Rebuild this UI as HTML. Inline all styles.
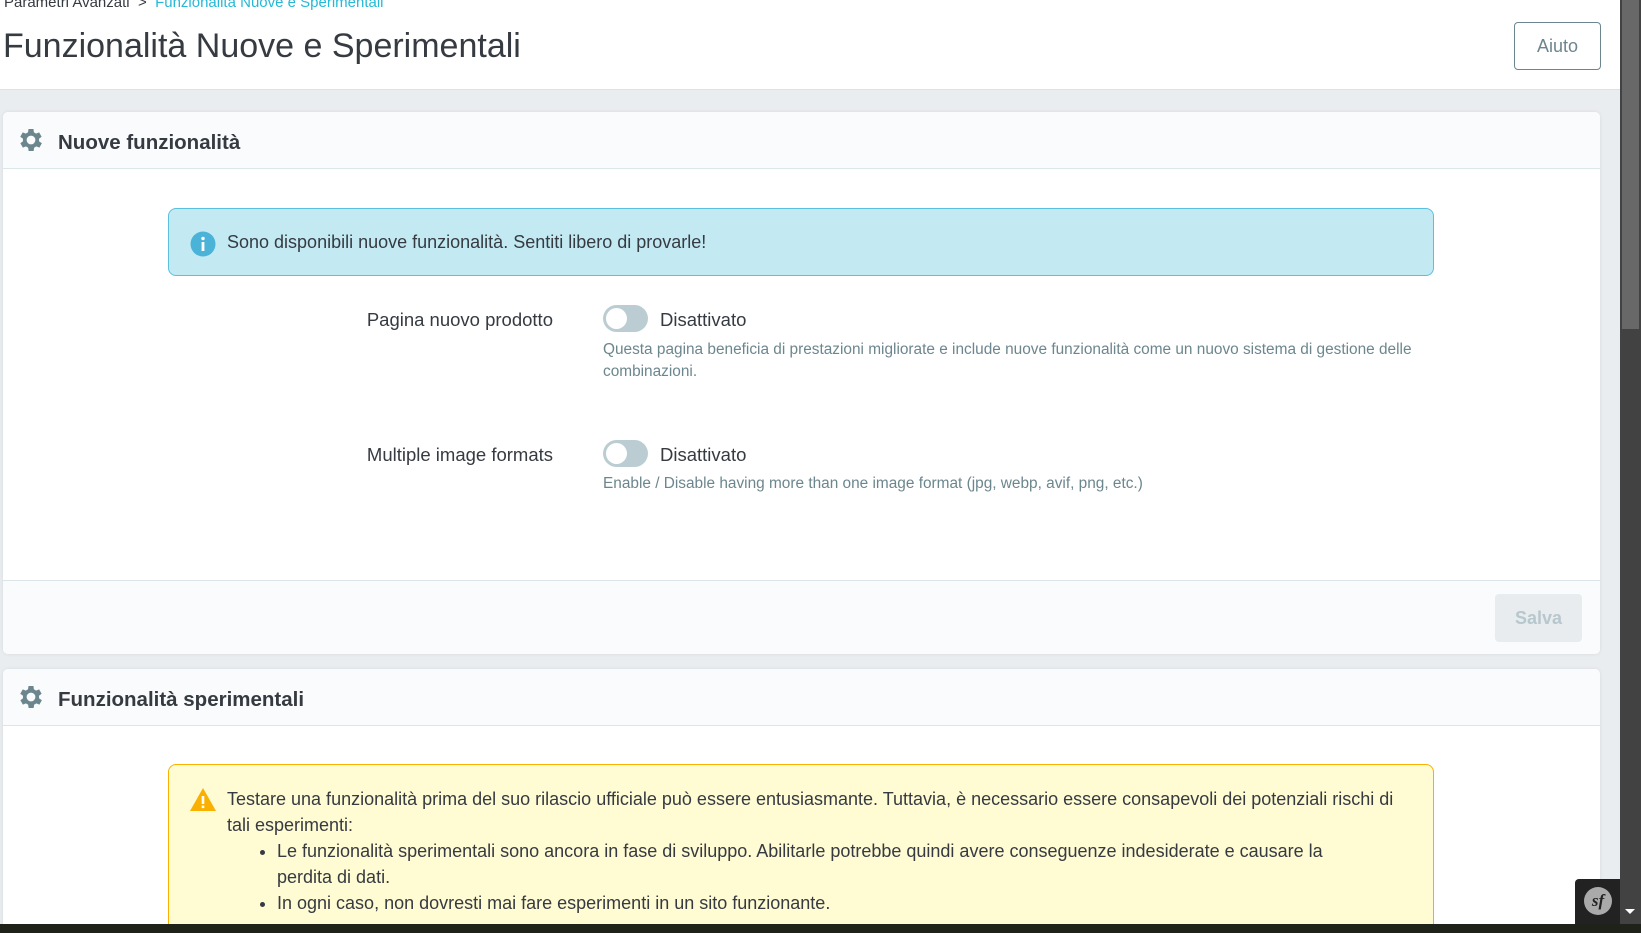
<!DOCTYPE html>
<html><head><meta charset="utf-8"><style>
*{box-sizing:border-box;margin:0;padding:0}
html,body{width:1641px;height:933px;overflow:hidden}
body{background:#eaedf0;font-family:"Liberation Sans",sans-serif;color:#363a41;position:relative}
.abs{position:absolute}
.hdr{left:0;top:0;width:1620px;height:90px;background:#fff;border-bottom:1px solid #dde2e6}
.bc{left:4px;top:-6px;font-size:15px;color:#363a41;white-space:nowrap}
.bc span{color:#25b9d7}
.title{left:3px;top:27px;font-size:34px;color:#363a41;white-space:nowrap}
.aiuto{left:1514px;top:22px;width:87px;height:48px;border:1px solid #6c868e;border-radius:4px;color:#6c868e;font-size:18px;text-align:center;line-height:46px}
.card{left:3px;width:1597px;background:#fff;border-radius:5px;box-shadow:0 0 4px rgba(0,0,0,.08);overflow:hidden}
.ch{position:absolute;left:0;top:0;width:100%;height:57px;background:#fafbfc;border-bottom:1px solid #dbe6e9}
.ct{position:absolute;left:55px;top:19px;font-size:20.5px;font-weight:bold;color:#363a41;white-space:nowrap}
.gear{position:absolute;left:13px;top:13px}
.alert{position:absolute;left:165px;width:1266px;border-radius:8px;font-size:18px}
.lbl{position:absolute;right:1047px;font-size:18.5px;white-space:nowrap;text-align:right}
.sw{position:absolute;left:600px;width:45px;height:27px;border-radius:14px;background:#bbcdd2}
.sw:after{content:"";position:absolute;left:3px;top:3px;width:21px;height:21px;border-radius:50%;background:#fff}
.st{position:absolute;left:657px;font-size:18.5px}
.help{position:absolute;left:600px;font-size:15.4px;color:#6c868e;line-height:22px;width:840px}
</style></head><body>
<div class="abs hdr"></div>
<div class="abs bc">Parametri Avanzati &nbsp;&gt;&nbsp; <span>Funzionalità Nuove e Sperimentali</span></div>
<div class="abs title">Funzionalità Nuove e Sperimentali</div>
<div class="abs aiuto">Aiuto</div>

<div class="abs card" style="top:112px;height:542px">
 <div class="ch"><svg class="gear" width="30" height="30" viewBox="0 0 24 24"><path fill="#6c868e" d="M19.4 13a7.5 7.5 0 0 0 0-2l2.1-1.6-2-3.5-2.5 1a7.6 7.6 0 0 0-1.7-1L15 3.2h-4l-.4 2.7a7.6 7.6 0 0 0-1.7 1l-2.5-1-2 3.5L6.6 11a7.5 7.5 0 0 0 0 2l-2.1 1.6 2 3.5 2.5-1a7.6 7.6 0 0 0 1.7 1l.4 2.7h4l.4-2.7a7.6 7.6 0 0 0 1.7-1l2.5 1 2-3.5zM13 15.5a3.5 3.5 0 1 1 0-7 3.5 3.5 0 0 1 0 7z" transform="translate(-1 0)"/></svg><div class="ct">Nuove funzionalità</div></div>
 <div class="alert" style="top:96px;height:68px;background:#c3eaf3;border:1px solid #5bc0de">
  <svg style="position:absolute;left:21px;top:22px" width="26" height="26" viewBox="0 0 26 26"><circle cx="13" cy="13" r="12.5" fill="#4bb3d8"/><rect x="11.6" y="11" width="2.8" height="9" fill="#fff"/><circle cx="13" cy="7.5" r="1.7" fill="#fff"/></svg>
  <div style="position:absolute;left:58px;top:23px;white-space:nowrap">Sono disponibili nuove funzionalità. Sentiti libero di provarle!</div>
 </div>
 <div class="lbl" style="top:197px">Pagina nuovo prodotto</div>
 <div class="sw" style="top:193px"></div>
 <div class="st" style="top:197px">Disattivato</div>
 <div class="help" style="top:227px">Questa pagina beneficia di prestazioni migliorate e include nuove funzionalità come un nuovo sistema di gestione delle combinazioni.</div>
 <div class="lbl" style="top:332px">Multiple image formats</div>
 <div class="sw" style="top:328px"></div>
 <div class="st" style="top:332px">Disattivato</div>
 <div class="help" style="top:361px">Enable / Disable having more than one image format (jpg, webp, avif, png, etc.)</div>
 <div style="position:absolute;left:0;top:468px;width:100%;height:74px;background:#fafbfc;border-top:1px solid #dbe6e9"></div>
 <div style="position:absolute;left:1492px;top:482px;width:87px;height:48px;border-radius:4px;background:#e9ecee;color:#b7c7ce;font-size:18px;font-weight:bold;text-align:center;line-height:48px">Salva</div>
</div>

<div class="abs card" style="top:669px;height:280px">
 <div class="ch"><svg class="gear" width="30" height="30" viewBox="0 0 24 24"><path fill="#6c868e" d="M19.4 13a7.5 7.5 0 0 0 0-2l2.1-1.6-2-3.5-2.5 1a7.6 7.6 0 0 0-1.7-1L15 3.2h-4l-.4 2.7a7.6 7.6 0 0 0-1.7 1l-2.5-1-2 3.5L6.6 11a7.5 7.5 0 0 0 0 2l-2.1 1.6 2 3.5 2.5-1a7.6 7.6 0 0 0 1.7 1l.4 2.7h4l.4-2.7a7.6 7.6 0 0 0 1.7-1l2.5 1 2-3.5zM13 15.5a3.5 3.5 0 1 1 0-7 3.5 3.5 0 0 1 0 7z" transform="translate(-1 0)"/></svg><div class="ct">Funzionalità sperimentali</div></div>
 <div class="alert" style="top:95px;height:200px;background:#fffbd3;border:1px solid #fab000">
  <svg style="position:absolute;left:20px;top:22px" width="28" height="25" viewBox="0 0 28 25"><path d="M14 1L27 24H1z" fill="#fab000"/><rect x="12.7" y="9" width="2.6" height="8" fill="#fff"/><rect x="12.7" y="18.5" width="2.6" height="2.6" fill="#fff"/></svg>
  <div style="position:absolute;left:58px;top:21px;width:1190px;line-height:26px">Testare una funzionalità prima del suo rilascio ufficiale può essere entusiasmante. Tuttavia, è necessario essere consapevoli dei potenziali rischi di tali esperimenti:
   <ul style="margin-left:50px;padding-left:0;list-style:disc">
    <li>Le funzionalità sperimentali sono ancora in fase di sviluppo. Abilitarle potrebbe quindi avere conseguenze indesiderate e causare la<br>perdita di dati.</li>
    <li>In ogni caso, non dovresti mai fare esperimenti in un sito funzionante.</li>
   </ul></div>
 </div>
</div>

<div class="abs" style="left:1620px;top:0;width:21px;height:924px;background:#424242"></div>
<div class="abs" style="left:1622px;top:0;width:17px;height:329px;background:#686868"></div>
<div class="abs" style="left:1625px;top:909px;width:0;height:0;border-left:5px solid transparent;border-right:5px solid transparent;border-top:5px solid #fff"></div>
<div class="abs" style="left:1575px;top:879px;width:45px;height:45px;background:#222;border-radius:4px 0 0 0"></div>
<div class="abs" style="left:1584px;top:887px;width:28px;height:28px;border-radius:50%;background:#aaa;color:#222;font-family:'Liberation Serif',serif;font-style:italic;font-weight:bold;font-size:17px;text-align:center;line-height:28px">sf</div>
<div class="abs" style="left:0;top:924px;width:1641px;height:40px;background:#1f2219;z-index:10"></div>
</body></html>
